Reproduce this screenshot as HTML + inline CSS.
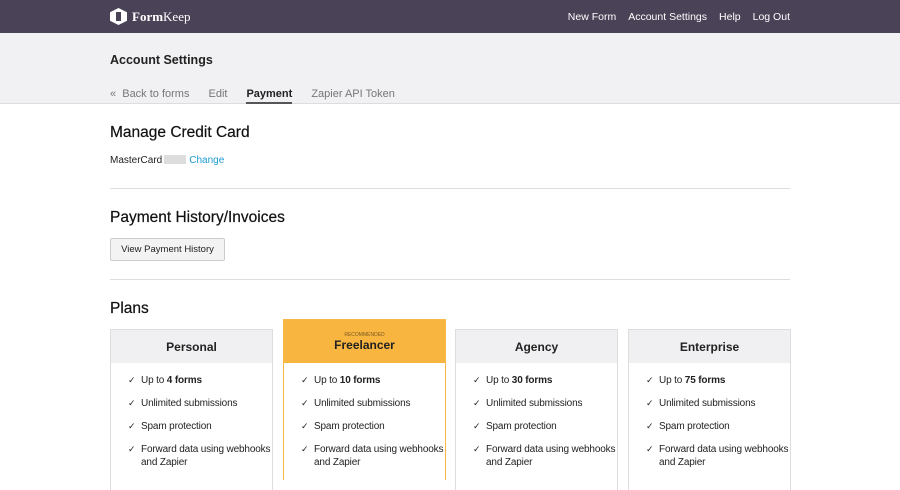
<!DOCTYPE html><html><head><style>
body{margin:0;width:900px;height:484px;overflow:hidden;font-family:"Liberation Sans",sans-serif;background:#fff;color:#222}
.nav{height:33px;background:#4a4257;position:relative}
.logo{position:absolute;left:110px;top:8px;color:#fff;font-size:13px;font-family:"Liberation Serif",serif;display:flex;align-items:center;gap:5px}
.hex{width:17px;height:17px;background:#fff;clip-path:polygon(50% 0,100% 25%,100% 75%,50% 100%,0 75%,0 25%);position:relative}
.hex:after{content:"";position:absolute;left:6px;top:4px;width:5px;height:9px;background:#4a4257}
.links{position:absolute;right:110px;top:11px;font-size:10.5px;color:#fff;display:flex;gap:12px}
.sub{background:#f1f0f2;height:70px;position:relative;border-bottom:1px solid #ddd}
.sub h1{position:absolute;left:110px;top:20px;margin:0;font-size:12.5px;font-weight:600}
.tabs{position:absolute;left:110px;top:55px;font-size:11px;color:#777;display:flex;gap:19px}
.tabs .a{color:#222;font-weight:bold;border-bottom:2px solid #555;padding-bottom:2px}
.sec{position:absolute;left:110px;width:680px}
h2{margin:0;font-size:15.5px;font-weight:normal;color:#111;-webkit-text-stroke:0.2px #111}
hr{border:0;border-top:1px solid #ddd;margin:0;position:absolute;left:110px;width:680px}
.btn{position:absolute;left:110px;top:238px;width:113px;height:21px;border:1px solid #ccc;border-radius:2px;background:#f3f3f3;font-size:9.5px;text-align:center;line-height:21px}
.card{position:absolute;top:329px;width:161px;height:160px;border:1px solid #ddd;border-bottom:0;background:#fff}
.card .h{height:33px;background:#f0f0f2;text-align:center;font-size:12px;font-weight:bold;line-height:35px}
.card.f{top:319px;border-color:#f6b94a}
.card.f .h{background:#f8b540;height:43px;line-height:normal}
ul{list-style:none;margin:0;padding:11px 0 0 17px;font-size:10px;letter-spacing:-0.15px}
li{margin-bottom:10px;padding-left:13px;position:relative;line-height:13px}
li:before{content:"✓";position:absolute;left:0;top:0;font-size:9px}
</style></head><body>
<div class="nav"><div class="logo"><div class="hex"></div><span><b>Form</b>Keep</span></div>
<div class="links"><span>New Form</span><span>Account Settings</span><span>Help</span><span>Log Out</span></div></div>
<div class="sub"><h1>Account Settings</h1><div class="tabs"><span>« &nbsp;Back to forms</span><span>Edit</span><span class="a">Payment</span><span>Zapier API Token</span></div></div>
<div class="sec" style="top:124px"><h2>Manage Credit Card</h2></div>
<div class="sec" style="top:155px;font-size:10px">MasterCard<span style="display:inline-block;width:22px;height:9px;background:#ddd;margin:0 3px -1px 2px"></span><span style="color:#1e9bd0">Change</span></div>
<hr style="top:188px">
<div class="sec" style="top:209px"><h2>Payment History/Invoices</h2></div>
<div class="btn">View Payment History</div>
<hr style="top:279px">
<div class="sec" style="top:300px"><h2>Plans</h2></div>
<div class="card" style="left:110px"><div class="h">Personal</div><ul><li>Up to <b>4 forms</b></li><li>Unlimited submissions</li><li>Spam protection</li><li>Forward data using webhooks and Zapier</li></ul></div>
<div class="card f" style="left:283px"><div class="h"><div style="font-size:5px;font-weight:normal;padding-top:12px;color:#7a5a20">RECOMMENDED</div><div style="font-size:12px">Freelancer</div></div><ul><li>Up to <b>10 forms</b></li><li>Unlimited submissions</li><li>Spam protection</li><li>Forward data using webhooks and Zapier</li></ul></div>
<div class="card" style="left:455px"><div class="h">Agency</div><ul><li>Up to <b>30 forms</b></li><li>Unlimited submissions</li><li>Spam protection</li><li>Forward data using webhooks and Zapier</li></ul></div>
<div class="card" style="left:628px"><div class="h">Enterprise</div><ul><li>Up to <b>75 forms</b></li><li>Unlimited submissions</li><li>Spam protection</li><li>Forward data using webhooks and Zapier</li></ul></div>
</body></html>
